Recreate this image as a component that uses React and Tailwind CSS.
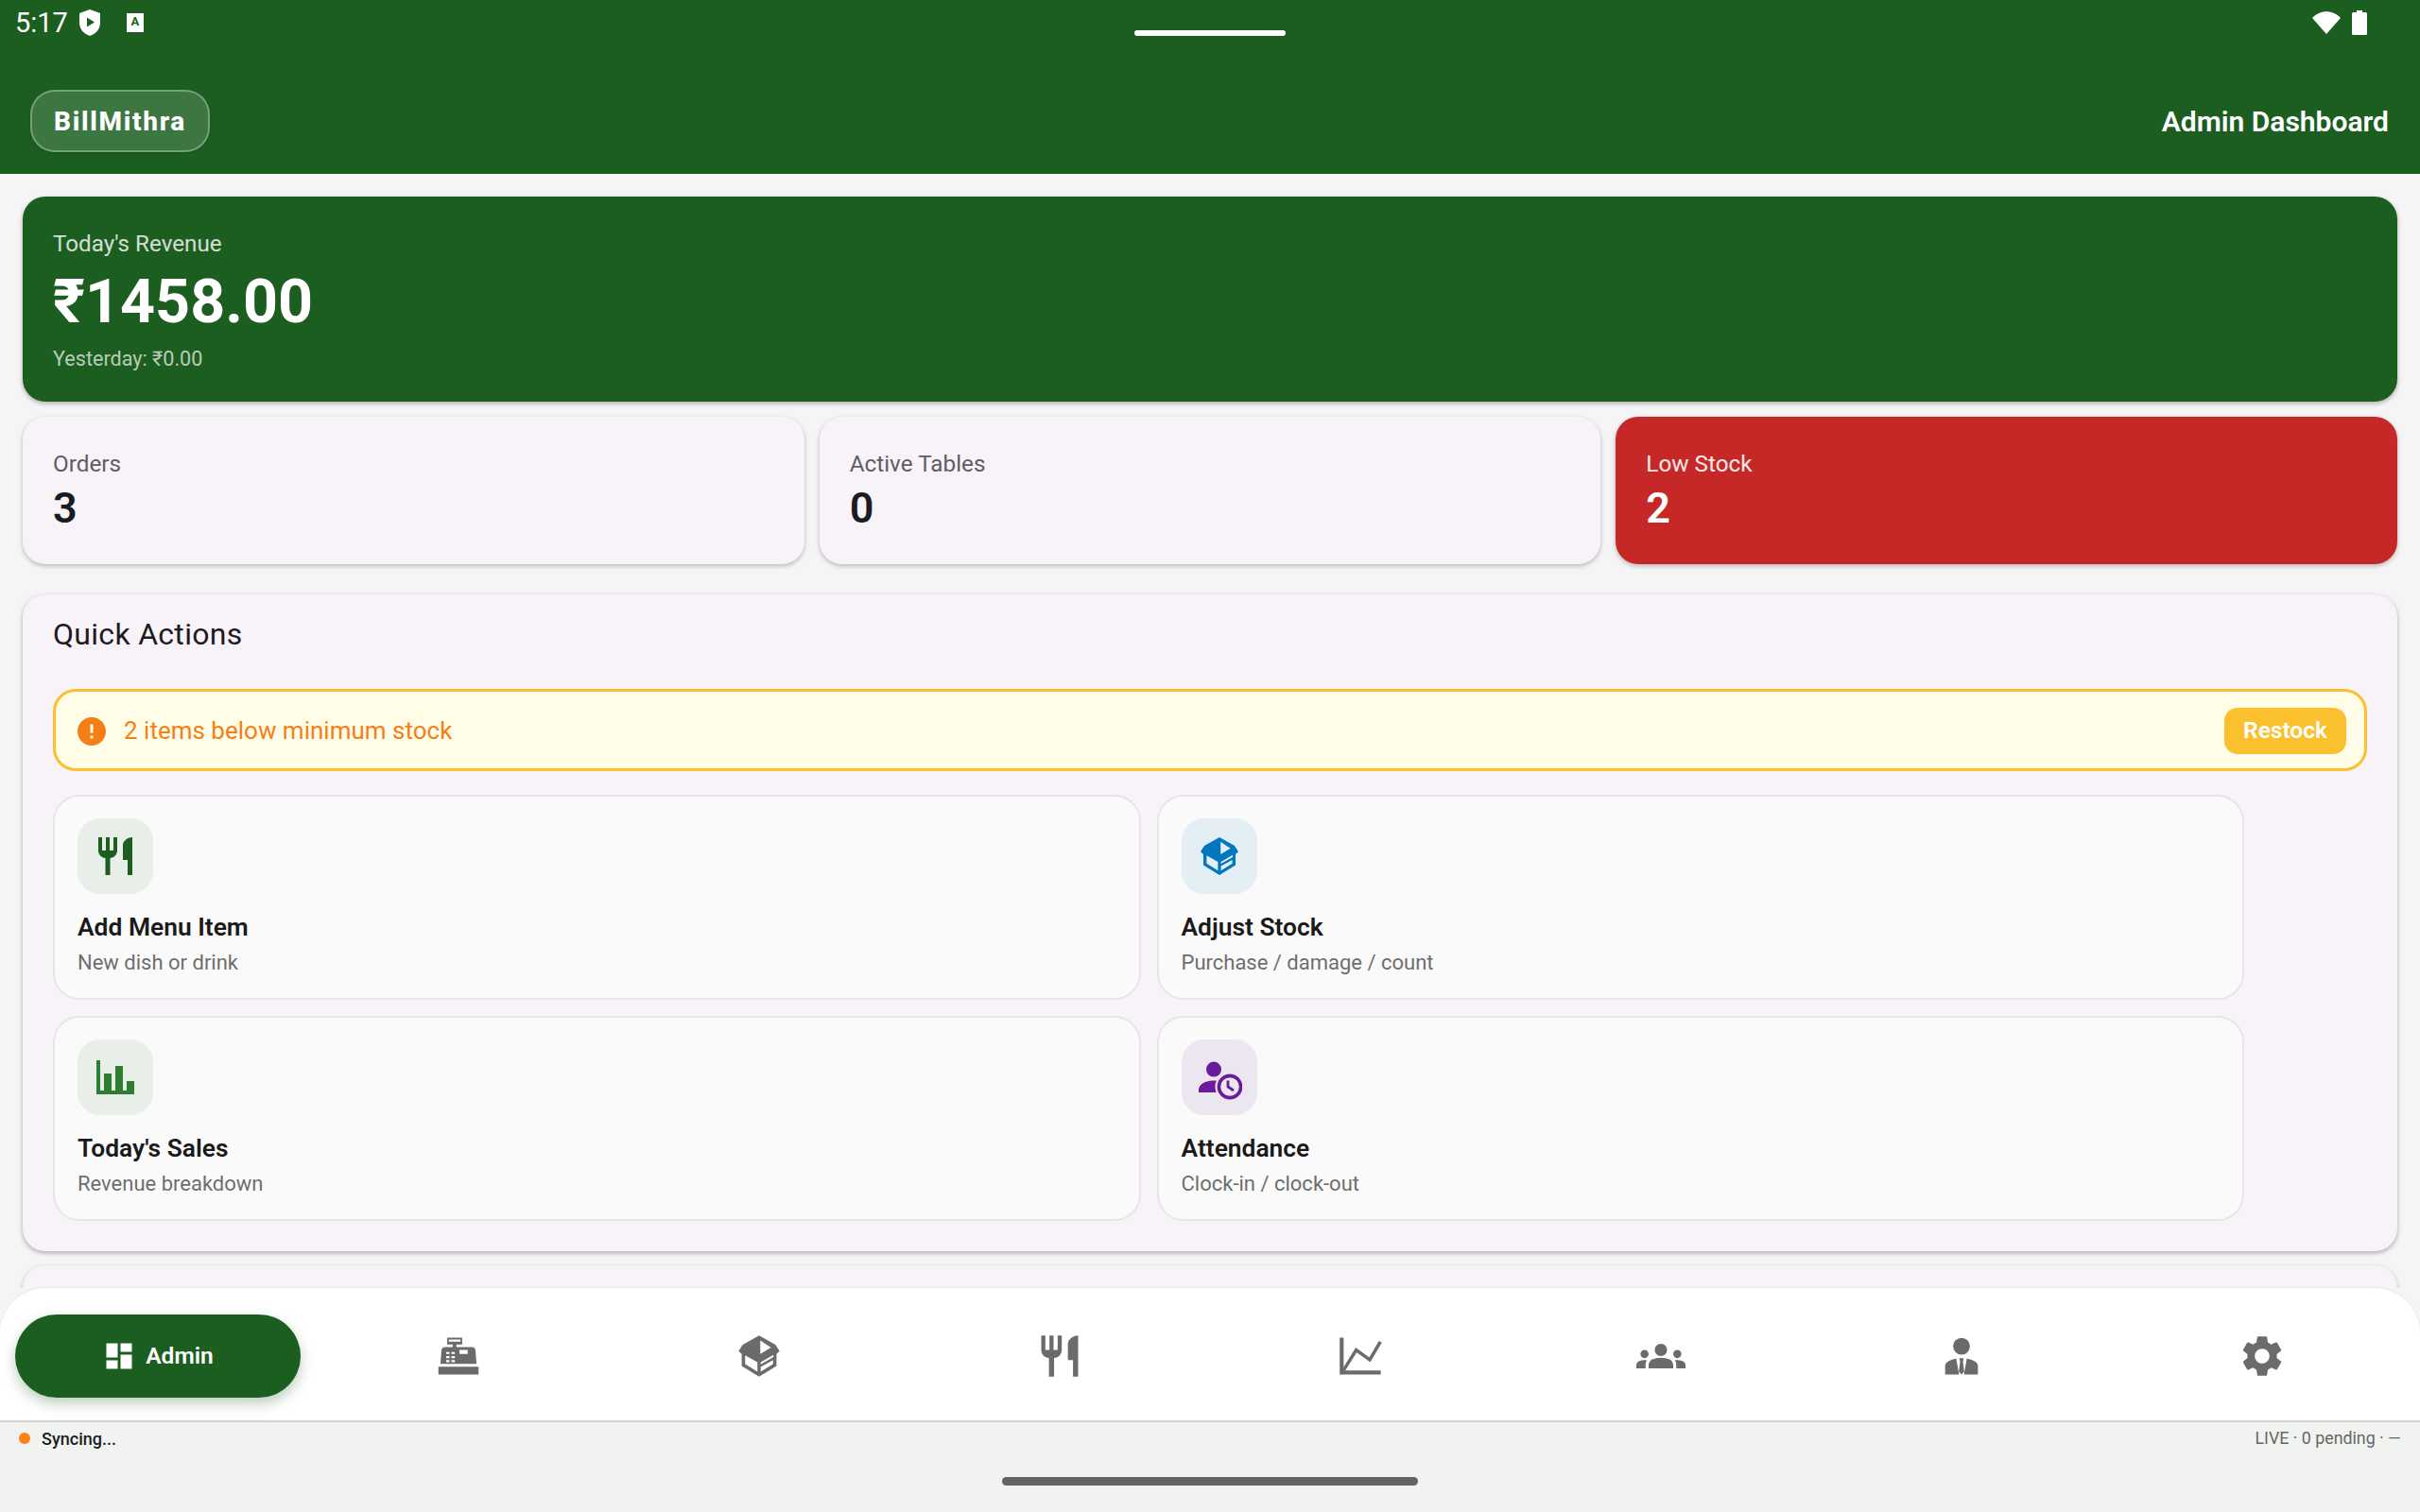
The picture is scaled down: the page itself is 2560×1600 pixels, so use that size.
import React from "react";
import { MdRestaurant, MdGroups, MdSettings, MdDashboard, MdError } from "react-icons/md";

const BoxIcon = ({ size = 48, className = "" }) => (
  <svg viewBox="0 0 24 24" width={size} height={size} className={className} fill="currentColor">
    <path
      fillRule="evenodd"
      d="M12 2 L20 6.5 L22 9.6 L20.5 11 V16.8 L12 22 L3.5 16.8 V11 L2 9.6 L4 6.5 Z M5.2 11.6 L11.2 15 V19.6 L5.2 15.9 Z M12.6 4.4 L17.8 7.9 L12.6 11 Z M12.8 15 L19 11.4 V12.5 L12.8 16 Z M12.8 17.3 L18.8 14 V15.9 L12.8 19.6 Z"
    />
  </svg>
);

const RegisterIcon = ({ size = 52 }) => (
  <svg viewBox="0 0 24 24" width={size} height={size} fill="currentColor">
    <path
      fillRule="evenodd"
      d="M6.5 3 H13.8 V6.4 H11 V7.6 H18.5 Q20 7.6 20.3 9 L20.8 15.8 H3.2 L3.7 9 Q4 7.6 5.5 7.6 H9.2 V6.4 H6.5 Z M7.3 3.9 V5 H13 V3.9 Z M12.5 9 V11 H16.5 V9 Z M6 10 V11 H7.6 V10 Z M8.6 10 V11 H10.2 V10 Z M6 12 V13 H7.6 V12 Z M8.6 12 V13 H10.2 V12 Z M6 14 V15 H7.6 V14 Z M8.6 14 V15 H10.2 V14 Z"
    />
    <path d="M2.2 17.2 H21.8 V21 H2.2 Z" />
  </svg>
);

const ChartIcon = ({ size = 52 }) => (
  <svg viewBox="0 0 24 24" width={size} height={size} fill="none" stroke="currentColor">
    <path d="M2.9 3 V20 H22" strokeWidth="1.9" />
    <path d="M3.8 19 L10 9 L16.6 13.8 L21.8 5" strokeWidth="1.6" />
  </svg>
);

const StaffIcon = ({ size = 52 }) => (
  <svg viewBox="0 0 24 24" width={size} height={size} fill="currentColor">
    <circle cx="12" cy="7.2" r="4.1" />
    <path d="M4 21 V16.6 Q4 14.6 9.4 13.2 L10.8 21 Z M20 21 V16.6 Q20 14.6 14.6 13.2 L13.2 21 Z" />
    <path d="M10.9 13 H13.1 L12.7 14.8 L13.3 19.6 L12 21 L10.7 19.6 L11.3 14.8 Z" />
  </svg>
);

const BarsIcon = () => (
  <svg viewBox="0 0 24 24" width={48} height={48} fill="currentColor">
    <path d="M2 3 H4 V19 H6 V10 H10 V19 H12 V6 H16 V19 H18 V14 H22 V21 H2 Z" />
  </svg>
);

const AttendanceIcon = () => (
  <svg viewBox="0 0 24 24" width={48} height={48}>
    <circle cx="9" cy="7.8" r="4" fill="currentColor" />
    <path d="M1 20 V18.5 C1 15.5 5 13.8 9 13.8 C12 13.8 15 14.6 15 17 V20 Z" fill="currentColor" />
    <circle cx="17.5" cy="17" r="7.8" fill="#ece6f1" />
    <circle cx="17.5" cy="17" r="5.8" fill="none" stroke="currentColor" strokeWidth="1.8" />
    <path d="M16.5 13.8 V17 L19.5 19" fill="none" stroke="currentColor" strokeWidth="1.4" />
  </svg>
);

const actions = [
  { title: "Add Menu Item", sub: "New dish or drink", box: "bg-[#e8eee8] text-[#1b5e20]", icon: <MdRestaurant size={48} /> },
  { title: "Adjust Stock", sub: "Purchase / damage / count", box: "bg-[#e3eef5] text-[#0277bd]", icon: <BoxIcon /> },
  { title: "Today's Sales", sub: "Revenue breakdown", box: "bg-[#e8efe9] text-[#2e7d32]", icon: <BarsIcon /> },
  { title: "Attendance", sub: "Clock-in / clock-out", box: "bg-[#ece6f1] text-[#6a1b9a]", icon: <AttendanceIcon /> },
];

const navIcons = [
  <RegisterIcon />,
  <BoxIcon size={52} />,
  <MdRestaurant size={52} />,
  <ChartIcon />,
  <MdGroups size={52} />,
  <StaffIcon />,
  <MdSettings size={52} />,
];

const StatCard = ({ label, value, red }) => (
  <div
    className={
      "h-[156px] rounded-[24px] pl-[32px] pt-[34px] shadow-[0_2px_5px_rgba(0,0,0,0.25)] " +
      (red ? "bg-[#c62828] text-white" : "bg-[#f7f3f9] text-[#1c1b1f]")
    }
  >
    <div className={"text-[24.3px] leading-[32px] " + (red ? "text-white/90" : "text-[#605d62]")}>{label}</div>
    <div className="mt-[4px] text-[45px] leading-[54px] font-semibold">{value}</div>
  </div>
);

const App = () => {
  return (
    <div className="flex h-[1600px] w-[2560px] flex-col overflow-hidden bg-[#f5f5f5] font-['Roboto',sans-serif]">
      <header className="h-[184px] shrink-0 bg-[#1b5e20] text-white">
        <div className="flex h-[46px] items-start">
          <div className="flex w-[1200px] items-center pl-[16px] pt-[7px]">
            <span className="text-[29px] leading-[34px] font-normal">5:17</span>
            <svg viewBox="0 0 22 28" width={22} height={28} className="ml-[12px]">
              <path d="M11 0 L22 4 V14 C22 21 17 26 11 28 C5 26 0 21 0 14 V4 Z" fill="#fff" />
              <path d="M8 8.5 L16 13.5 L8 18.5 Z" fill="#1b5e20" />
            </svg>
            <span className="ml-[28px] flex h-[20px] w-[18px] items-start justify-center bg-white text-[13px] leading-[17px] font-bold text-[#1b5e20]">
              A
            </span>
          </div>
          <div className="mt-[32px] h-[6px] w-[160px] rounded-full bg-white" />
          <div className="flex w-[1200px] justify-end pr-[56px] pt-[11px]">
            <svg viewBox="0 0 30 24" width={30} height={24} className="mt-[1px]">
              <path d="M0 7 C8 -2 22 -2 30 7 L15 24 Z" fill="#fff" />
            </svg>
            <svg viewBox="0 0 16 26" width={16} height={26} className="ml-[12px]">
              <path d="M5 0 H11 V2 H14.5 Q16 2 16 3.5 V24.5 Q16 26 14.5 26 H1.5 Q0 26 0 24.5 V3.5 Q0 2 1.5 2 H5 Z" fill="#fff" />
            </svg>
          </div>
        </div>
        <div className="mt-[49px] flex items-center justify-between pl-[32px] pr-[33px]">
          <div className="flex h-[66px] w-[190px] items-center justify-center rounded-[26px] border-2 border-white/30 bg-white/15 pt-[2px] text-[28px] font-extrabold tracking-[1.7px] shadow-sm">
            BillMithra
          </div>
          <div className="text-[30px] font-semibold">Admin Dashboard</div>
        </div>
      </header>

      <main className="flex-1 overflow-hidden px-[24px] pt-[24px]">
        <div className="h-[217px] rounded-[24px] bg-[#1b5e20] pl-[32px] pt-[34px] shadow-[0_2px_5px_rgba(0,0,0,0.3)]">
          <div className="text-[24.2px] leading-[32px] text-white/80">Today's Revenue</div>
          <div className="mt-[7px] text-[64.6px] leading-[76px] font-bold text-white">₹1458.00</div>
          <div className="mt-[8px] text-[21.6px] leading-[30px] text-white/70">Yesterday: ₹0.00</div>
        </div>

        <div className="mt-[16px] grid grid-cols-3 gap-[16px]">
          <StatCard label="Orders" value="3" />
          <StatCard label="Active Tables" value="0" />
          <StatCard label="Low Stock" value="2" red />
        </div>

        <section className="mt-[32px] h-[695px] rounded-[24px] bg-[#f7f3f9] px-[32px] pt-[24px] shadow-[0_2px_5px_rgba(0,0,0,0.3)]">
          <h2 className="text-[32px] leading-[36px] tracking-[0.3px] text-[#1c1b1f]">Quick Actions</h2>

          <div className="mt-[40px] flex h-[87px] items-center justify-between rounded-[24px] border-[3px] border-[#fbc02d] bg-[#fffde7] pl-[20px] pr-[19px] pt-[2px]">
            <div className="flex items-center gap-[16px] text-[26px] text-[#f57f17]">
              <MdError size={36} />
              <span>2 items below minimum stock</span>
            </div>
            <button className="flex h-[49px] w-[129px] items-center justify-center rounded-[14px] bg-[#fbc02d] text-[24.5px] font-semibold text-white">
              Restock
            </button>
          </div>

          <div className="mt-[25px] grid w-[2318px] grid-cols-2 gap-x-[17px] gap-y-[17px]">
            {actions.map((a) => (
              <div key={a.title} className="h-[217px] rounded-[28px] border-2 border-[#e6e6e6] bg-[#fafafa] pl-[24px] pt-[23px]">
                <div className={"flex h-[80px] w-[80px] items-center justify-center rounded-[24px] " + a.box}>{a.icon}</div>
                <div className="mt-[17px] text-[26.4px] leading-[36px] font-semibold text-[#1a1a1a]">{a.title}</div>
                <div className="mt-[4px] text-[22px] leading-[32px] text-[#6e6e6e]">{a.sub}</div>
              </div>
            ))}
          </div>
        </section>

        <div className="mt-[15px] h-[60px] rounded-[24px] bg-[#f7f3f9] shadow-[0_2px_5px_rgba(0,0,0,0.25)]" />
      </main>

      <nav className="flex h-[142px] shrink-0 items-center rounded-t-[48px] border-b-2 border-[#d2d4d1] bg-white px-[8px] pt-[3px] shadow-[0_-1px_2px_rgba(0,0,0,0.06)]">
        <div className="grid w-full grid-cols-8">
          <div className="mx-[8px] flex h-[88px] items-center justify-center gap-[10px] rounded-full bg-[#1b5e20] text-white shadow-[0_6px_14px_rgba(27,94,32,0.3)]">
            <MdDashboard size={36} />
            <span className="pt-[2px] text-[24.5px] font-semibold">Admin</span>
          </div>
          {navIcons.map((icon, i) => (
            <div key={i} className="flex items-center justify-center text-[#6b6b6b]">
              {icon}
            </div>
          ))}
        </div>
      </nav>

      <footer className="h-[95px] shrink-0 bg-[#f1f3f0]">
        <div className="flex h-[34px] items-center justify-between pl-[20px] pr-[20px]">
          <div className="flex items-center gap-[12px]">
            <span className="h-[12px] w-[12px] rounded-full bg-[#fb8316]" />
            <span className="text-[18px] font-medium text-[#1c1b1f]">Syncing...</span>
          </div>
          <span className="text-[17.8px] text-[#666666]">LIVE · 0 pending · —</span>
        </div>
        <div className="mx-auto mt-[24px] h-[9px] w-[440px] rounded-full bg-[#636363]" />
      </footer>
    </div>
  );
};

export default App;
